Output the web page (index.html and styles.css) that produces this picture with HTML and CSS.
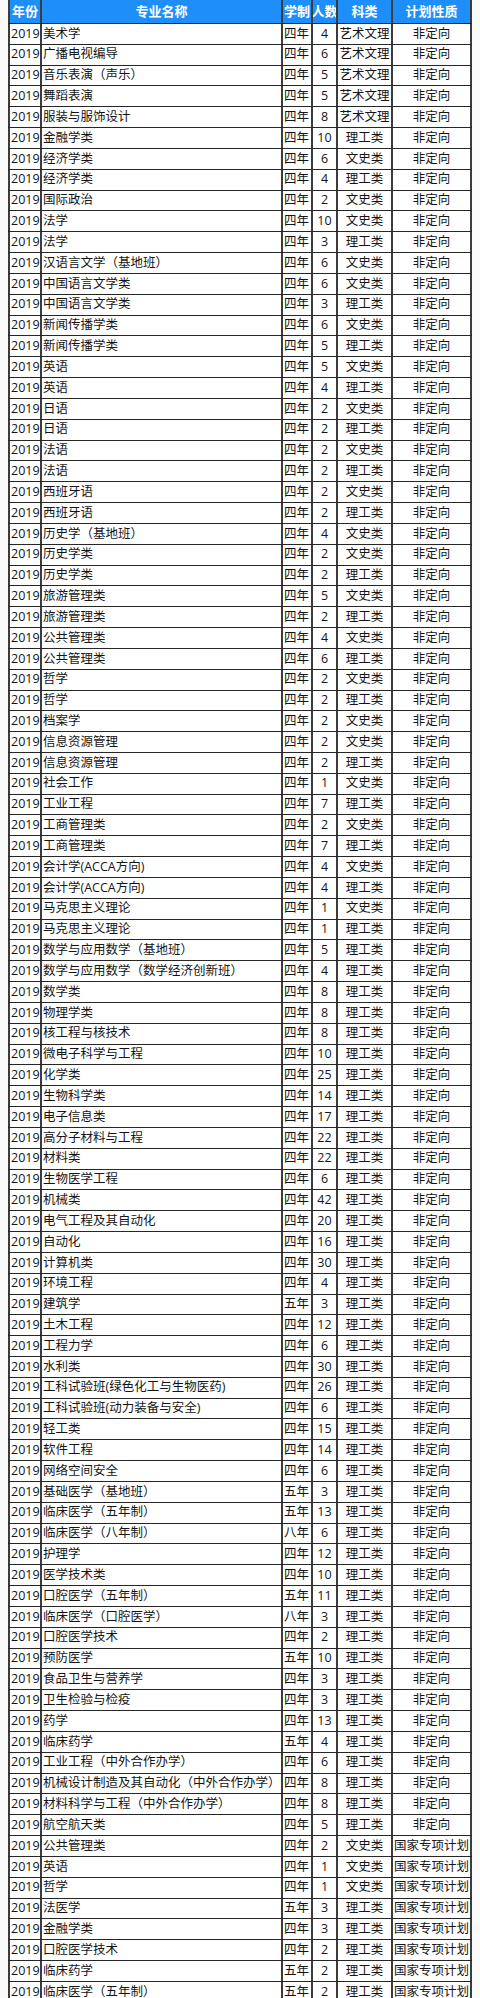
FILE: index.html
```html
<!DOCTYPE html>
<html lang="zh-CN">
<head>
<meta charset="utf-8">
<title>2019 招生计划</title>
<link rel="stylesheet" href="styles.css">
</head>
<body>
<div class="sheet">
<div class="row head"><span>年份</span><span>专业名称</span><span>学制</span><span>人数</span><span>科类</span><span>计划性质</span></div>
<div class="row"><span>2019</span><span>美术学</span><span>四年</span><span>4</span><span>艺术文理</span><span>非定向</span></div>
<div class="row"><span>2019</span><span>广播电视编导</span><span>四年</span><span>6</span><span>艺术文理</span><span>非定向</span></div>
<div class="row"><span>2019</span><span>音乐表演（声乐）</span><span>四年</span><span>5</span><span>艺术文理</span><span>非定向</span></div>
<div class="row"><span>2019</span><span>舞蹈表演</span><span>四年</span><span>5</span><span>艺术文理</span><span>非定向</span></div>
<div class="row"><span>2019</span><span>服装与服饰设计</span><span>四年</span><span>8</span><span>艺术文理</span><span>非定向</span></div>
<div class="row"><span>2019</span><span>金融学类</span><span>四年</span><span>10</span><span>理工类</span><span>非定向</span></div>
<div class="row"><span>2019</span><span>经济学类</span><span>四年</span><span>6</span><span>文史类</span><span>非定向</span></div>
<div class="row"><span>2019</span><span>经济学类</span><span>四年</span><span>4</span><span>理工类</span><span>非定向</span></div>
<div class="row"><span>2019</span><span>国际政治</span><span>四年</span><span>2</span><span>文史类</span><span>非定向</span></div>
<div class="row"><span>2019</span><span>法学</span><span>四年</span><span>10</span><span>文史类</span><span>非定向</span></div>
<div class="row"><span>2019</span><span>法学</span><span>四年</span><span>3</span><span>理工类</span><span>非定向</span></div>
<div class="row"><span>2019</span><span>汉语言文学（基地班）</span><span>四年</span><span>6</span><span>文史类</span><span>非定向</span></div>
<div class="row"><span>2019</span><span>中国语言文学类</span><span>四年</span><span>6</span><span>文史类</span><span>非定向</span></div>
<div class="row"><span>2019</span><span>中国语言文学类</span><span>四年</span><span>3</span><span>理工类</span><span>非定向</span></div>
<div class="row"><span>2019</span><span>新闻传播学类</span><span>四年</span><span>6</span><span>文史类</span><span>非定向</span></div>
<div class="row"><span>2019</span><span>新闻传播学类</span><span>四年</span><span>5</span><span>理工类</span><span>非定向</span></div>
<div class="row"><span>2019</span><span>英语</span><span>四年</span><span>5</span><span>文史类</span><span>非定向</span></div>
<div class="row"><span>2019</span><span>英语</span><span>四年</span><span>4</span><span>理工类</span><span>非定向</span></div>
<div class="row"><span>2019</span><span>日语</span><span>四年</span><span>2</span><span>文史类</span><span>非定向</span></div>
<div class="row"><span>2019</span><span>日语</span><span>四年</span><span>2</span><span>理工类</span><span>非定向</span></div>
<div class="row"><span>2019</span><span>法语</span><span>四年</span><span>2</span><span>文史类</span><span>非定向</span></div>
<div class="row"><span>2019</span><span>法语</span><span>四年</span><span>2</span><span>理工类</span><span>非定向</span></div>
<div class="row"><span>2019</span><span>西班牙语</span><span>四年</span><span>2</span><span>文史类</span><span>非定向</span></div>
<div class="row"><span>2019</span><span>西班牙语</span><span>四年</span><span>2</span><span>理工类</span><span>非定向</span></div>
<div class="row"><span>2019</span><span>历史学（基地班）</span><span>四年</span><span>4</span><span>文史类</span><span>非定向</span></div>
<div class="row"><span>2019</span><span>历史学类</span><span>四年</span><span>2</span><span>文史类</span><span>非定向</span></div>
<div class="row"><span>2019</span><span>历史学类</span><span>四年</span><span>2</span><span>理工类</span><span>非定向</span></div>
<div class="row"><span>2019</span><span>旅游管理类</span><span>四年</span><span>5</span><span>文史类</span><span>非定向</span></div>
<div class="row"><span>2019</span><span>旅游管理类</span><span>四年</span><span>2</span><span>理工类</span><span>非定向</span></div>
<div class="row"><span>2019</span><span>公共管理类</span><span>四年</span><span>4</span><span>文史类</span><span>非定向</span></div>
<div class="row"><span>2019</span><span>公共管理类</span><span>四年</span><span>6</span><span>理工类</span><span>非定向</span></div>
<div class="row"><span>2019</span><span>哲学</span><span>四年</span><span>2</span><span>文史类</span><span>非定向</span></div>
<div class="row"><span>2019</span><span>哲学</span><span>四年</span><span>2</span><span>理工类</span><span>非定向</span></div>
<div class="row"><span>2019</span><span>档案学</span><span>四年</span><span>2</span><span>文史类</span><span>非定向</span></div>
<div class="row"><span>2019</span><span>信息资源管理</span><span>四年</span><span>2</span><span>文史类</span><span>非定向</span></div>
<div class="row"><span>2019</span><span>信息资源管理</span><span>四年</span><span>2</span><span>理工类</span><span>非定向</span></div>
<div class="row"><span>2019</span><span>社会工作</span><span>四年</span><span>1</span><span>文史类</span><span>非定向</span></div>
<div class="row"><span>2019</span><span>工业工程</span><span>四年</span><span>7</span><span>理工类</span><span>非定向</span></div>
<div class="row"><span>2019</span><span>工商管理类</span><span>四年</span><span>2</span><span>文史类</span><span>非定向</span></div>
<div class="row"><span>2019</span><span>工商管理类</span><span>四年</span><span>7</span><span>理工类</span><span>非定向</span></div>
<div class="row"><span>2019</span><span>会计学(ACCA方向)</span><span>四年</span><span>4</span><span>文史类</span><span>非定向</span></div>
<div class="row"><span>2019</span><span>会计学(ACCA方向)</span><span>四年</span><span>4</span><span>理工类</span><span>非定向</span></div>
<div class="row"><span>2019</span><span>马克思主义理论</span><span>四年</span><span>1</span><span>文史类</span><span>非定向</span></div>
<div class="row"><span>2019</span><span>马克思主义理论</span><span>四年</span><span>1</span><span>理工类</span><span>非定向</span></div>
<div class="row"><span>2019</span><span>数学与应用数学（基地班）</span><span>四年</span><span>5</span><span>理工类</span><span>非定向</span></div>
<div class="row"><span>2019</span><span>数学与应用数学（数学经济创新班）</span><span>四年</span><span>4</span><span>理工类</span><span>非定向</span></div>
<div class="row"><span>2019</span><span>数学类</span><span>四年</span><span>8</span><span>理工类</span><span>非定向</span></div>
<div class="row"><span>2019</span><span>物理学类</span><span>四年</span><span>8</span><span>理工类</span><span>非定向</span></div>
<div class="row"><span>2019</span><span>核工程与核技术</span><span>四年</span><span>8</span><span>理工类</span><span>非定向</span></div>
<div class="row"><span>2019</span><span>微电子科学与工程</span><span>四年</span><span>10</span><span>理工类</span><span>非定向</span></div>
<div class="row"><span>2019</span><span>化学类</span><span>四年</span><span>25</span><span>理工类</span><span>非定向</span></div>
<div class="row"><span>2019</span><span>生物科学类</span><span>四年</span><span>14</span><span>理工类</span><span>非定向</span></div>
<div class="row"><span>2019</span><span>电子信息类</span><span>四年</span><span>17</span><span>理工类</span><span>非定向</span></div>
<div class="row"><span>2019</span><span>高分子材料与工程</span><span>四年</span><span>22</span><span>理工类</span><span>非定向</span></div>
<div class="row"><span>2019</span><span>材料类</span><span>四年</span><span>22</span><span>理工类</span><span>非定向</span></div>
<div class="row"><span>2019</span><span>生物医学工程</span><span>四年</span><span>6</span><span>理工类</span><span>非定向</span></div>
<div class="row"><span>2019</span><span>机械类</span><span>四年</span><span>42</span><span>理工类</span><span>非定向</span></div>
<div class="row"><span>2019</span><span>电气工程及其自动化</span><span>四年</span><span>20</span><span>理工类</span><span>非定向</span></div>
<div class="row"><span>2019</span><span>自动化</span><span>四年</span><span>16</span><span>理工类</span><span>非定向</span></div>
<div class="row"><span>2019</span><span>计算机类</span><span>四年</span><span>30</span><span>理工类</span><span>非定向</span></div>
<div class="row"><span>2019</span><span>环境工程</span><span>四年</span><span>4</span><span>理工类</span><span>非定向</span></div>
<div class="row"><span>2019</span><span>建筑学</span><span>五年</span><span>3</span><span>理工类</span><span>非定向</span></div>
<div class="row"><span>2019</span><span>土木工程</span><span>四年</span><span>12</span><span>理工类</span><span>非定向</span></div>
<div class="row"><span>2019</span><span>工程力学</span><span>四年</span><span>6</span><span>理工类</span><span>非定向</span></div>
<div class="row"><span>2019</span><span>水利类</span><span>四年</span><span>30</span><span>理工类</span><span>非定向</span></div>
<div class="row"><span>2019</span><span>工科试验班(绿色化工与生物医药)</span><span>四年</span><span>26</span><span>理工类</span><span>非定向</span></div>
<div class="row"><span>2019</span><span>工科试验班(动力装备与安全)</span><span>四年</span><span>6</span><span>理工类</span><span>非定向</span></div>
<div class="row"><span>2019</span><span>轻工类</span><span>四年</span><span>15</span><span>理工类</span><span>非定向</span></div>
<div class="row"><span>2019</span><span>软件工程</span><span>四年</span><span>14</span><span>理工类</span><span>非定向</span></div>
<div class="row"><span>2019</span><span>网络空间安全</span><span>四年</span><span>6</span><span>理工类</span><span>非定向</span></div>
<div class="row"><span>2019</span><span>基础医学（基地班）</span><span>五年</span><span>3</span><span>理工类</span><span>非定向</span></div>
<div class="row"><span>2019</span><span>临床医学（五年制）</span><span>五年</span><span>13</span><span>理工类</span><span>非定向</span></div>
<div class="row"><span>2019</span><span>临床医学（八年制）</span><span>八年</span><span>6</span><span>理工类</span><span>非定向</span></div>
<div class="row"><span>2019</span><span>护理学</span><span>四年</span><span>12</span><span>理工类</span><span>非定向</span></div>
<div class="row"><span>2019</span><span>医学技术类</span><span>四年</span><span>10</span><span>理工类</span><span>非定向</span></div>
<div class="row"><span>2019</span><span>口腔医学（五年制）</span><span>五年</span><span>11</span><span>理工类</span><span>非定向</span></div>
<div class="row"><span>2019</span><span>临床医学（口腔医学）</span><span>八年</span><span>3</span><span>理工类</span><span>非定向</span></div>
<div class="row"><span>2019</span><span>口腔医学技术</span><span>四年</span><span>2</span><span>理工类</span><span>非定向</span></div>
<div class="row"><span>2019</span><span>预防医学</span><span>五年</span><span>10</span><span>理工类</span><span>非定向</span></div>
<div class="row"><span>2019</span><span>食品卫生与营养学</span><span>四年</span><span>3</span><span>理工类</span><span>非定向</span></div>
<div class="row"><span>2019</span><span>卫生检验与检疫</span><span>四年</span><span>3</span><span>理工类</span><span>非定向</span></div>
<div class="row"><span>2019</span><span>药学</span><span>四年</span><span>13</span><span>理工类</span><span>非定向</span></div>
<div class="row"><span>2019</span><span>临床药学</span><span>五年</span><span>4</span><span>理工类</span><span>非定向</span></div>
<div class="row"><span>2019</span><span>工业工程（中外合作办学）</span><span>四年</span><span>6</span><span>理工类</span><span>非定向</span></div>
<div class="row"><span>2019</span><span>机械设计制造及其自动化（中外合作办学）</span><span>四年</span><span>8</span><span>理工类</span><span>非定向</span></div>
<div class="row"><span>2019</span><span>材料科学与工程（中外合作办学）</span><span>四年</span><span>8</span><span>理工类</span><span>非定向</span></div>
<div class="row"><span>2019</span><span>航空航天类</span><span>四年</span><span>5</span><span>理工类</span><span>非定向</span></div>
<div class="row"><span>2019</span><span>公共管理类</span><span>四年</span><span>2</span><span>文史类</span><span>国家专项计划</span></div>
<div class="row"><span>2019</span><span>英语</span><span>四年</span><span>1</span><span>文史类</span><span>国家专项计划</span></div>
<div class="row"><span>2019</span><span>哲学</span><span>四年</span><span>1</span><span>文史类</span><span>国家专项计划</span></div>
<div class="row"><span>2019</span><span>法医学</span><span>五年</span><span>3</span><span>理工类</span><span>国家专项计划</span></div>
<div class="row"><span>2019</span><span>金融学类</span><span>四年</span><span>3</span><span>理工类</span><span>国家专项计划</span></div>
<div class="row"><span>2019</span><span>口腔医学技术</span><span>四年</span><span>2</span><span>理工类</span><span>国家专项计划</span></div>
<div class="row"><span>2019</span><span>临床药学</span><span>五年</span><span>2</span><span>理工类</span><span>国家专项计划</span></div>
<div class="row"><span>2019</span><span>临床医学（五年制）</span><span>五年</span><span>2</span><span>理工类</span><span>国家专项计划</span></div>
</div>
</body>
</html>
```
FILE: styles.css
```css
html, body {
  margin: 0;
  padding: 0;
  background: #fafafa;
}
body {
  font-family: "Open Sans", "Noto Sans CJK SC", sans-serif;
  font-size: 12.5px;
  color: #141414;
}
.sheet {
  width: 464px;
  margin: 0 8px;
  display: flex;
  flex-direction: column;
}
.row {
  display: grid;
  grid-template-columns: 34px 241px 30px 25px 55px 79px;
  height: 20.83px;
  box-sizing: border-box;
  border-bottom: 1px solid #262626;
  background: #fff;
}
.row > span {
  box-sizing: border-box;
  border-right: 2px solid #3c3c3c;
  display: flex;
  align-items: center;
  justify-content: center;
  white-space: nowrap;
  overflow: hidden;
  line-height: 1;
}
.row > span:first-child {
  border-left: 2px solid #3c3c3c;
  justify-content: flex-start;
  padding-left: 1px;
}
.row > span:nth-child(2) {
  justify-content: flex-start;
  padding-left: 1px;
}
.row > span:nth-child(3) {
  justify-content: flex-start;
  padding-left: 1px;
}
.row.head {
  height: 24px;
  background: #1e8ffa;
  color: #fff;
  font-weight: bold;
  font-size: 13px;
}
.row.head > span {
  justify-content: center;
  padding-left: 0;
}
```
